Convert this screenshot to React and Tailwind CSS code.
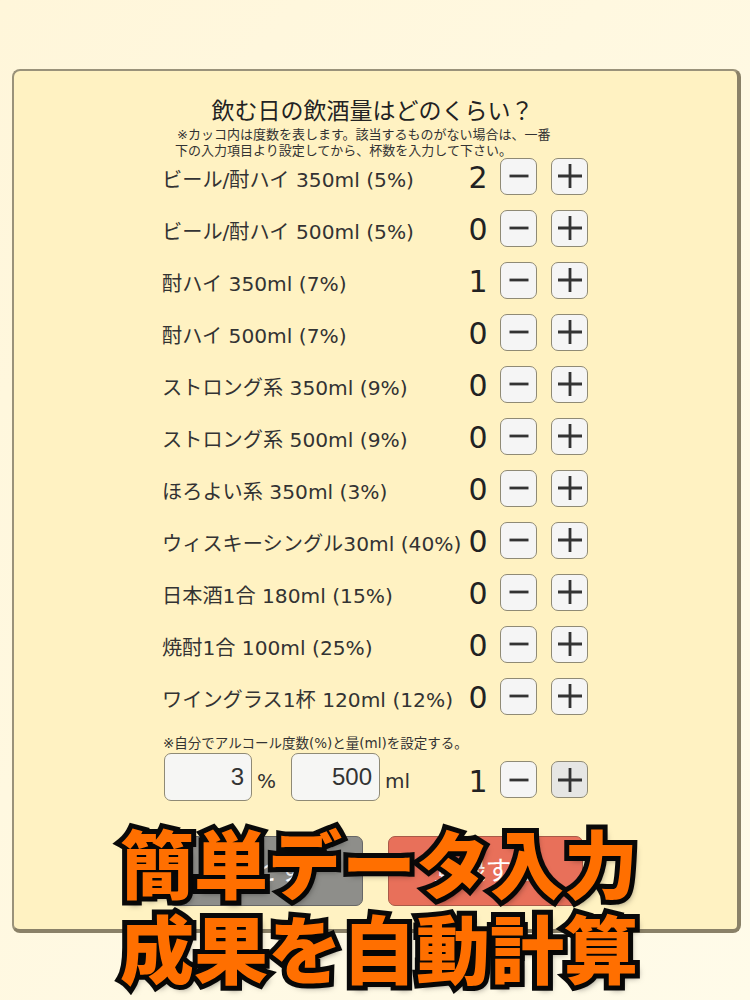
const rows = [
  ['ビール/酎ハイ 350ml (5%)', 2],
  ['ビール/酎ハイ 500ml (5%)', 0],
  ['酎ハイ 350ml (7%)', 1],
  ['酎ハイ 500ml (7%)', 0],
  ['ストロング系 350ml (9%)', 0],
  ['ストロング系 500ml (9%)', 0],
  ['ほろよい系 350ml (3%)', 0],
  ['ウィスキーシングル30ml (40%)', 0],
  ['日本酒1合 180ml (15%)', 0],
  ['焼酎1合 100ml (25%)', 0],
  ['ワイングラス1杯 120ml (12%)', 0],
];

function StepButton({ plus, pressed }) {
  return (
    <button
      type="button"
      className={`w-[37px] h-[37px] rounded-[7px] border-[1.5px] border-[#8f8a75] flex items-center justify-center ${pressed ? 'bg-[#e6e6e4]' : 'bg-[#f5f5f5]'}`}
    >
      <svg width="26" height="26" viewBox="0 0 26 26" stroke="#333" strokeWidth="2.8" fill="none">
        {plus ? <path d="M1 13h24M13 1v24" /> : <path d="M3.5 13h19" />}
      </svg>
    </button>
  );
}

function Stepper({ value, pressed }) {
  return (
    <div className="flex items-center">
      <span className="w-[36px] mt-[4px] text-center text-[30px] leading-none text-[#222]">{value}</span>
      <div className="ml-[4px] flex gap-[14px]">
        <StepButton />
        <StepButton plus pressed={pressed} />
      </div>
    </div>
  );
}

function NumberBox({ value, className }) {
  return (
    <div className={`h-[48px] rounded-[7px] border-[1.5px] border-[#8f8a75] bg-[#f6f6f4] pr-[7px] flex items-center justify-end font-['Liberation_Sans',sans-serif] text-[24px] text-[#333] ${className}`}>
      {value}
    </div>
  );
}

export default function App() {
  return (
    <div className="w-[750px] h-[1000px] relative overflow-hidden bg-gradient-to-br from-[#fff6da] to-[#fffbe9] pt-[69px] pl-[12px] font-['DejaVu_Sans','Noto_Sans_CJK_JP',sans-serif]">
      <div className="w-[729px] h-[864px] rounded-[8px] border-t-2 border-l-2 border-[#9a927a] border-r-4 border-b-4 border-r-[#8a8168] border-b-[#8a8168] bg-[#fff2c2] pt-[26px]">
        <h1 className="w-[717px] text-center text-[23px] leading-[28px] text-[#222]">飲む日の飲酒量はどのくらい？</h1>
        <p className="ml-[161px] mt-[2px] w-[400px] text-[13px] leading-[16px] text-[#333] whitespace-nowrap">
          <span className="block pl-[2px]">※カッコ内は度数を表します。該当するものがない場合は、一番</span>
          <span className="block">下の入力項目より設定してから、杯数を入力して下さい。</span>
        </p>

        <div className="ml-[148px] mt-[-9px]">
          {rows.map(([label, count]) => (
            <div key={label} className="h-[52px] flex items-center">
              <span className="w-[298px] mt-[8px] whitespace-nowrap text-[20.2px] text-[#333]">{label}</span>
              <Stepper value={count} />
            </div>
          ))}
        </div>

        <p className="ml-[149px] mt-[13px] text-[13.5px] leading-[16px] text-[#333]">※自分でアルコール度数(%)と量(ml)を設定する。</p>
        <div className="ml-[150px] mt-[2px] flex items-center">
          <NumberBox value="3" className="w-[88px]" />
          <span className="ml-[5px] w-[34px] mt-[8px] text-[20px] text-[#333]">%</span>
          <NumberBox value="500" className="w-[89px]" />
          <span className="ml-[5px] w-[75px] mt-[8px] text-[20px] text-[#333]">ml</span>
          <div className="mt-[5px]">
            <Stepper value={1} pressed />
          </div>
        </div>

        <div className="ml-[154px] mt-[35px] flex gap-[25px]">
          <button type="button" className="w-[195px] h-[70px] rounded-[7px] border border-[#666] bg-[#8e8e8a] text-white text-[26px]">もどす</button>
          <button type="button" className="w-[195px] h-[70px] rounded-[7px] border border-[#a85a48] bg-[#e8705a] text-white text-[26px]">登録する</button>
        </div>
      </div>

      {/* promo caption over the screen */}
      <div className="absolute left-0 top-[818px] w-full pl-[8px] text-center font-['Noto_Sans_CJK_JP',sans-serif] font-black text-[#ff6f00] text-[74px] leading-[85px] [-webkit-text-stroke:10px_#0a0a0a] [paint-order:stroke_fill] [text-shadow:3px_4px_6px_rgba(0,0,0,0.5)]">
        <div>簡単データ入力</div>
        <div>成果を自動計算</div>
      </div>
    </div>
  );
}
